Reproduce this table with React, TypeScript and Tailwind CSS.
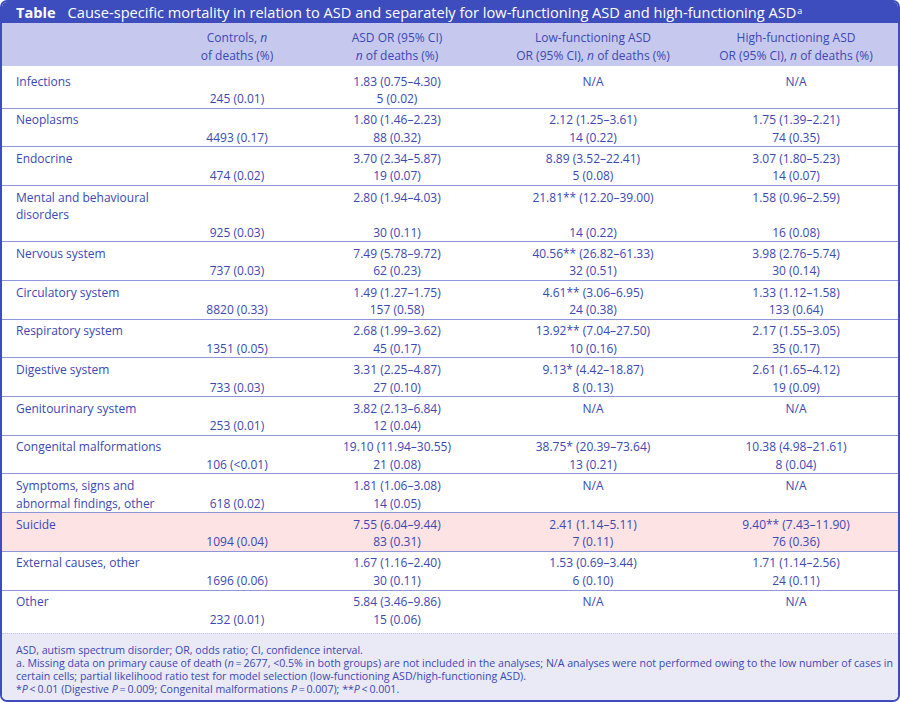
import React from "react";

type Row = {
  label: React.ReactNode;
  ctrl: string;
  asd: [string, string];
  low: [string, string] | null;
  high: [string, string] | null;
  lines?: number;
  pink?: boolean;
};

const rows: Row[] = [
  { label: "Infections", ctrl: "245 (0.01)", asd: ["1.83 (0.75–4.30)", "5 (0.02)"], low: null, high: null },
  { label: "Neoplasms", ctrl: "4493 (0.17)", asd: ["1.80 (1.46–2.23)", "88 (0.32)"], low: ["2.12 (1.25–3.61)", "14 (0.22)"], high: ["1.75 (1.39–2.21)", "74 (0.35)"] },
  { label: "Endocrine", ctrl: "474 (0.02)", asd: ["3.70 (2.34–5.87)", "19 (0.07)"], low: ["8.89 (3.52–22.41)", "5 (0.08)"], high: ["3.07 (1.80–5.23)", "14 (0.07)"] },
  { label: (<>Mental and behavioural<br />disorders</>), ctrl: "925 (0.03)", asd: ["2.80 (1.94–4.03)", "30 (0.11)"], low: ["21.81** (12.20–39.00)", "14 (0.22)"], high: ["1.58 (0.96–2.59)", "16 (0.08)"], lines: 3 },
  { label: "Nervous system", ctrl: "737 (0.03)", asd: ["7.49 (5.78–9.72)", "62 (0.23)"], low: ["40.56** (26.82–61.33)", "32 (0.51)"], high: ["3.98 (2.76–5.74)", "30 (0.14)"] },
  { label: "Circulatory system", ctrl: "8820 (0.33)", asd: ["1.49 (1.27–1.75)", "157 (0.58)"], low: ["4.61** (3.06–6.95)", "24 (0.38)"], high: ["1.33 (1.12–1.58)", "133 (0.64)"] },
  { label: "Respiratory system", ctrl: "1351 (0.05)", asd: ["2.68 (1.99–3.62)", "45 (0.17)"], low: ["13.92** (7.04–27.50)", "10 (0.16)"], high: ["2.17 (1.55–3.05)", "35 (0.17)"] },
  { label: "Digestive system", ctrl: "733 (0.03)", asd: ["3.31 (2.25–4.87)", "27 (0.10)"], low: ["9.13* (4.42–18.87)", "8 (0.13)"], high: ["2.61 (1.65–4.12)", "19 (0.09)"] },
  { label: "Genitourinary system", ctrl: "253 (0.01)", asd: ["3.82 (2.13–6.84)", "12 (0.04)"], low: null, high: null },
  { label: "Congenital malformations", ctrl: "106 (<0.01)", asd: ["19.10 (11.94–30.55)", "21 (0.08)"], low: ["38.75* (20.39–73.64)", "13 (0.21)"], high: ["10.38 (4.98–21.61)", "8 (0.04)"] },
  { label: (<>Symptoms, signs and<br />abnormal findings, other</>), ctrl: "618 (0.02)", asd: ["1.81 (1.06–3.08)", "14 (0.05)"], low: null, high: null },
  { label: "Suicide", ctrl: "1094 (0.04)", asd: ["7.55 (6.04–9.44)", "83 (0.31)"], low: ["2.41 (1.14–5.11)", "7 (0.11)"], high: ["9.40** (7.43–11.90)", "76 (0.36)"], pink: true },
  { label: "External causes, other", ctrl: "1696 (0.06)", asd: ["1.67 (1.16–2.40)", "30 (0.11)"], low: ["1.53 (0.69–3.44)", "6 (0.10)"], high: ["1.71 (1.14–2.56)", "24 (0.11)"] },
  { label: "Other", ctrl: "232 (0.01)", asd: ["5.84 (3.46–9.86)", "15 (0.06)"], low: null, high: null },
];

const cols = "grid grid-cols-[170px_130px_190px_202px_204px]";

function OrCell({ v }: { v: [string, string] | null }) {
  if (!v) {
    return (
      <div className="flex flex-col text-center">
        <div>N/A</div>
      </div>
    );
  }
  return (
    <div className="flex flex-col justify-between text-center">
      <div>{v[0]}</div>
      <div>{v[1]}</div>
    </div>
  );
}

export default function App() {
  return (
    <div
      className="w-[900px] h-[702px] bg-white overflow-hidden"
      style={{ fontFamily: '"Open Sans", "Noto Sans", sans-serif' }}
    >
      <div className="w-[900px] h-[702px] border-2 border-[#3d4dbd] rounded-[7px] overflow-hidden flex flex-col text-[#3b48b4]">
        <div className="h-[21px] bg-[#3d4dbd] text-white text-[14.6px] leading-[21px] pl-[14px] flex whitespace-nowrap">
          <span className="font-bold mr-[12px]">Table</span>
          <span>
            Cause-specific mortality in relation to ASD and separately for low-functioning ASD and high-functioning ASD
            <sup className="text-[9px] ml-[1px]">a</sup>
          </span>
        </div>
        <div className={`${cols} h-[43px] bg-[#c6c9ed] text-[12px] leading-[17.5px] pt-[6px]`}>
          <div />
          <div className="text-center">
            Controls, <i>n</i>
            <br />
            of deaths (%)
          </div>
          <div className="text-center">
            ASD OR (95% CI)
            <br />
            <i>n</i> of deaths (%)
          </div>
          <div className="text-center">
            Low-functioning ASD
            <br />
            OR (95% CI), <i>n</i> of deaths (%)
          </div>
          <div className="text-center">
            High-functioning ASD
            <br />
            OR (95% CI), <i>n</i> of deaths (%)
          </div>
        </div>
        {rows.map((r, i) => {
          const first = i === 0;
          const last = i === rows.length - 1;
          return (
            <div
              key={i}
              className={`${cols} text-[12px] leading-[17.6px] ${
                r.pink ? "bg-[#fde3e4]" : "bg-white"
              } ${first ? "pt-[6.5px]" : "pt-[2.5px]"} ${
                last ? "pb-[4.5px]" : "border-b border-[#8f97da]"
              }`}
            >
              <div className="pl-[14px] whitespace-nowrap" style={{ minHeight: (r.lines ?? 2) * 17.6 }}>
                {r.label}
              </div>
              <div className="flex flex-col justify-end text-center">
                <div>{r.ctrl}</div>
              </div>
              <OrCell v={r.asd} />
              <OrCell v={r.low} />
              <OrCell v={r.high} />
            </div>
          );
        })}
        <div className="flex-1 bg-[#eaeaf6] border-t border-dotted border-[#c3c6ea] text-[10.6px] leading-[13px] pl-[14px] pt-[10px] whitespace-nowrap">
          <div>ASD, autism spectrum disorder; OR, odds ratio; CI, confidence interval.</div>
          <div>
            a. Missing data on primary cause of death (<i>n</i>&thinsp;=&thinsp;2677, &lt;0.5% in both groups) are not included in the analyses; N/A analyses were not performed owing to the low number of cases in
          </div>
          <div>
            certain cells; partial likelihood ratio test for model selection (low-functioning ASD/high-functioning ASD).
          </div>
          <div>
            *<i>P</i>&thinsp;&lt;&thinsp;0.01 (Digestive <i>P</i>&thinsp;=&thinsp;0.009; Congenital malformations <i>P</i>&thinsp;=&thinsp;0.007); **<i>P</i>&thinsp;&lt;&thinsp;0.001.
          </div>
        </div>
      </div>
    </div>
  );
}
